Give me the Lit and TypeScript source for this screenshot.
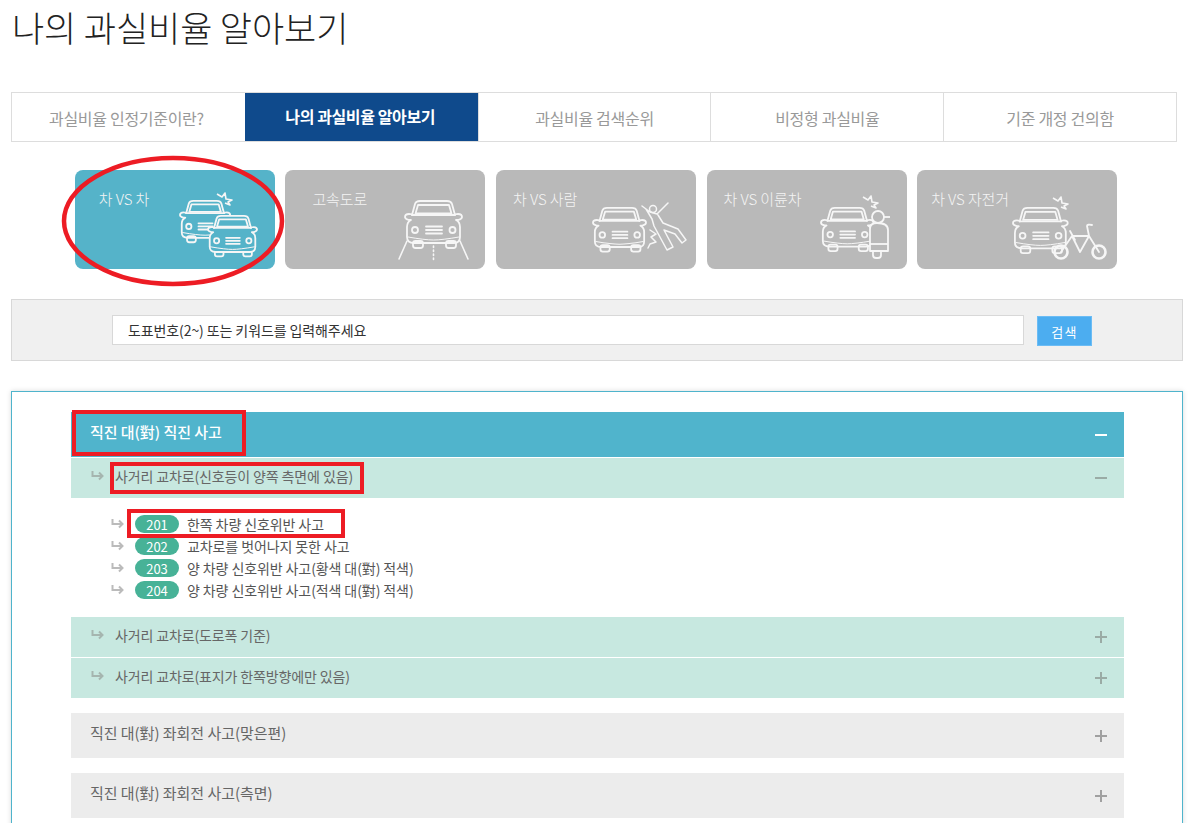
import { LitElement, html, css, svg } from "lit";
import { customElement } from "lit/decorators.js";

const car = (x: number, y: number, s: number, fill = "none") => svg`
  <g transform="translate(${x} ${y}) scale(${s})" fill="${fill}" stroke="#f6f6f6" stroke-width="${1.8 / s}" stroke-linejoin="round" stroke-linecap="round">
    <rect x="8" y="41" width="10" height="7" rx="2.5"/><rect x="41" y="41" width="10" height="7" rx="2.5"/>
    <path d="M7 15 L10 4 Q11 1 15 1 H42 Q46 1 47 4 L50 15 Q50 14 53 14 Q57 14 57 17 Q57 19 53 20 H51 Q55 22 55 27 V37 Q55 43 49 43 H9 Q2 43 2 37 V27 Q2 22 6 20 H4 Q0 19 0 17 Q0 14 4 14 Q7 14 7 15Z"/>
    <path d="M13 5 H44 L46.500 13.500 H10.500Z"/>
    <path d="M7 15 H50"/>
    <path d="M3 37 Q20 40 28.500 40 Q37 40 54 37" stroke-width="${1 / s}"/>
    <circle cx="10" cy="30" r="3"/><circle cx="47.500" cy="30" r="3"/>
    <path d="M21 26.500 H37 M21 30 H37 M21 33.500 H37"/>
  </g>`;

const burst = (x: number, y: number) => svg`
  <path transform="translate(${x} ${y})" d="M0 1 L5 4 L8 0 L9 6 L15 7 L11 9 L13 12 L8 10" fill="none" stroke="#f6f6f6" stroke-width="1.600" stroke-linejoin="round"/>`;

const icons = [
  svg`${burst(142, 23)}${car(105, 30, 0.88)}${car(133, 45, 0.86, "#55b3c9")}`,
  svg`${car(120, 30, 1)}
    <g fill="none" stroke="#f6f6f6" stroke-width="1.600" stroke-linecap="round">
      <path d="M122 71 L114 89 M175 71 L183 89"/>
      <path d="M148.500 76 V92" stroke-dasharray="1.500 2.500"/>
    </g>`,
  svg`${car(97, 37, 0.93)}
    <g fill="none" stroke="#f6f6f6" stroke-width="1.500" stroke-linejoin="round" stroke-linecap="round">
      <circle cx="157" cy="39" r="3.500"/>
      <path d="M172 33 L161 44 L154 42 L146 36 M150 39 L156 49 L158 56 L171 80 L177 77 L168 60 L179 64 L186 73 L190 70 L182 59 L167 53 L162 45"/>
      <path d="M154 60 L160 64 L155 67 L160 72 L154 74 L152 78"/>
    </g>`,
  svg`${car(114, 37, 0.92)}${burst(156, 26)}
    <g stroke="#f6f6f6" stroke-width="1.800" fill="#b9b9b9" stroke-linejoin="round">
      <rect x="166" y="78" width="8" height="10" rx="3"/>
      <path d="M163 81 V59 Q163 53 170 53 Q181 53 181 60 V81Z"/>
      <path d="M163 74 H181" fill="none"/>
      <circle cx="171" cy="47" r="6"/>
      <path d="M177 47 H183" fill="none"/>
    </g>`,
  svg`${car(96, 37, 0.96)}${burst(136, 27)}
    <g fill="none" stroke="#f6f6f6" stroke-linejoin="round" stroke-linecap="round">
      <circle cx="144" cy="82" r="6.500" stroke-width="2.600"/>
      <circle cx="182" cy="82" r="6.500" stroke-width="2.600"/>
      <path d="M144 82 L155 66 L172 66 L182 82 M155 66 L163 82 L172 66 M172 66 L170 56 Q170 54 175 55 M153 61 L158 70" stroke-width="1.800"/>
    </g>`,
];

const arrow = html`<svg class="arrow" width="13" height="10" viewBox="0 0 13 10"><path d="M1.500 0 V5 H11 M8 1.500 L11.500 5 L8 8.500" fill="none" stroke="currentColor" stroke-width="2"/></svg>`;

@customElement("app-root")
export class AppRoot extends LitElement {
  static styles = css`
    :host { display: block; position: relative; height: 823px; overflow: hidden; background: #fff;
      font-family: "Noto Sans CJK KR", "Noto Sans", sans-serif; color: #555; }
    h1 { margin: 0; padding: 4px 0 0 12px; height: 92px; box-sizing: border-box; font-size: 35px; line-height: 46px; font-weight: 300; color: #222; letter-spacing: -0.1px; }
    .tabs { display: grid; grid-template-columns: repeat(5, 1fr); width: 1166px; height: 50px; margin-left: 11px; box-sizing: border-box; border: 1px solid #ddd; }
    .tab { display: flex; align-items: center; justify-content: center; box-sizing: border-box; padding-top: 1px; font-size: 16px; color: #999; border-left: 1px solid #ddd; letter-spacing: -0.3px; }
    .tab:first-child { border-left: 0; padding-right: 4px; }
    .tab.on { background: #0f4a8c; color: #fff; font-weight: 700; border-left: 0; letter-spacing: -0.4px; padding: 0 2px 3px 0; }
    .cards { display: flex; gap: 10.600px; margin: 28px 0 0 74.800px; }
    .card { display: grid; width: 200px; height: 99px; border-radius: 8px; background: #b9b9b9; color: #f4f4f4; font-size: 15px; font-weight: 300; letter-spacing: -0.1px; }
    .card.on { background: #55b3c9; }
    .card > * { grid-area: 1 / 1; }
    .card svg { width: 200px; height: 99px; }
    .label { padding-top: 18px; line-height: 22px; }
    .l0 { padding-left: 24px; } .l1 { padding-left: 27px; } .l2 { padding-left: 17px; } .l3 { padding-left: 17px; } .l4 { padding-left: 14px; }
    .search { display: flex; align-items: center; box-sizing: border-box; width: 1172px; height: 62px; margin: 30px 0 0 11px; padding: 0 0 0 100px; background: #f0f0f0; border: 1px solid #d8d8d8; }
    .input { display: flex; align-items: center; box-sizing: border-box; width: 912px; height: 30px; padding-left: 15px; background: #fff; border: 1px solid #d8d8d8; font-size: 14px; color: #333; letter-spacing: -0.1px; }
    .btn { display: flex; align-items: center; justify-content: center; box-sizing: border-box; width: 55px; height: 30px; margin: 2px 0 0 13px; background: #4cadf0; border: 1px solid #6bbcf5; color: #fff; font-size: 13px; letter-spacing: 1.2px; }
    .panel { box-sizing: border-box; width: 1172px; margin: 30px 0 0 11px; padding: 20px 58px 20px 59px; background: #fff; border: 1px solid #4fb4cc; box-shadow: 0 0 5px rgba(0,0,0,.15); }
    .row { display: flex; align-items: center; justify-content: space-between; box-sizing: border-box; padding: 0 17px 0 19px; font-size: 15px; letter-spacing: -0.05px; }
    .row > span { display: flex; align-items: center; margin-top: -6px; }
    .h { height: 45px; background: #50b4cc; color: #fff; font-weight: 500; }
    .s { height: 40px; background: #c7e8e0; color: #666; margin-top: 1px; padding-left: 20px; font-size: 14px; letter-spacing: -0.13px; }
    .row.s > span { margin-top: -5px; }
    .s .arrow { margin-right: 11px; color: #a5b5af; }
    .g { height: 45px; background: #ececec; color: #666; margin-top: 15px; }
    .sign { position: relative; display: block; width: 12px; height: 12px; flex: none; }
    .sign::before, .sign.plus::after { content: ""; position: absolute; background: currentColor; }
    .sign::before { left: 0; top: 5px; width: 12px; height: 2px; }
    .sign.plus::after { left: 5px; top: 0; width: 2px; height: 12px; }
    .sign { color: #9aaba5; } .h .sign { color: #fff; } .g .sign { color: #a0a0a0; }
    ul { list-style: none; margin: 0; padding: 15px 0 15px 40px; }
    li { display: flex; align-items: center; height: 22px; font-size: 14px; color: #555; letter-spacing: -0.1px; }
    li .arrow { color: #bbb; margin-right: 11px; }
    .badge { display: flex; align-items: center; justify-content: center; width: 44px; height: 18px; margin-right: 8px; border-radius: 9px; background: #47b297; color: #fff; font-size: 13px; letter-spacing: 0; }
    .mark { position: absolute; box-sizing: border-box; border: 4px solid #ed1c24; pointer-events: none; }
    .m1 { left: 72px; top: 410px; width: 174px; height: 46px; }
    .m2 { left: 110px; top: 462px; width: 254px; height: 32px; }
    .m3 { left: 127px; top: 509px; width: 218px; height: 29px; }
    .ring { position: absolute; left: 60px; top: 154px; width: 226px; height: 134px; pointer-events: none; }
  `;

  render() {
    const tabs = ["과실비율 인정기준이란?", "나의 과실비율 알아보기", "과실비율 검색순위", "비정형 과실비율", "기준 개정 건의함"];
    const cards = ["차 VS 차", "고속도로", "차 VS 사람", "차 VS 이륜차", "차 VS 자전거"];
    const items = ["한쪽 차량 신호위반 사고", "교차로를 벗어나지 못한 사고", "양 차량 신호위반 사고(황색 대(對) 적색)", "양 차량 신호위반 사고(적색 대(對) 적색)"];
    return html`
      <h1>나의 과실비율 알아보기</h1>
      <div class="tabs">${tabs.map((t, i) => html`<div class="tab ${i === 1 ? "on" : ""}">${t}</div>`)}</div>
      <div class="cards">
        ${cards.map((c, i) => html`<div class="card ${i === 0 ? "on" : ""}">
          <div class="label l${i}">${c}</div>
          <svg viewBox="0 0 200 99">${icons[i]}</svg>
        </div>`)}
      </div>
      <div class="search">
        <div class="input">도표번호(2~) 또는 키워드를 입력해주세요</div>
        <div class="btn">검색</div>
      </div>
      <div class="panel">
        <div class="row h"><span>직진 대(對) 직진 사고</span><i class="sign"></i></div>
        <div class="row s"><span>${arrow}사거리 교차로(신호등이 양쪽 측면에 있음)</span><i class="sign"></i></div>
        <ul>
          ${items.map((t, i) => html`<li>${arrow}<span class="badge">${201 + i}</span>${t}</li>`)}
        </ul>
        <div class="row s"><span>${arrow}사거리 교차로(도로폭 기준)</span><i class="sign plus"></i></div>
        <div class="row s"><span>${arrow}사거리 교차로(표지가 한쪽방향에만 있음)</span><i class="sign plus"></i></div>
        <div class="row g"><span>직진 대(對) 좌회전 사고(맞은편)</span><i class="sign plus"></i></div>
        <div class="row g"><span>직진 대(對) 좌회전 사고(측면)</span><i class="sign plus"></i></div>
      </div>
      <div class="mark m1"></div>
      <div class="mark m2"></div>
      <div class="mark m3"></div>
      <svg class="ring" viewBox="0 0 226 134"><ellipse cx="113" cy="67" rx="109" ry="63" fill="none" stroke="#ed1c24" stroke-width="4.500"/></svg>
    `;
  }
}
